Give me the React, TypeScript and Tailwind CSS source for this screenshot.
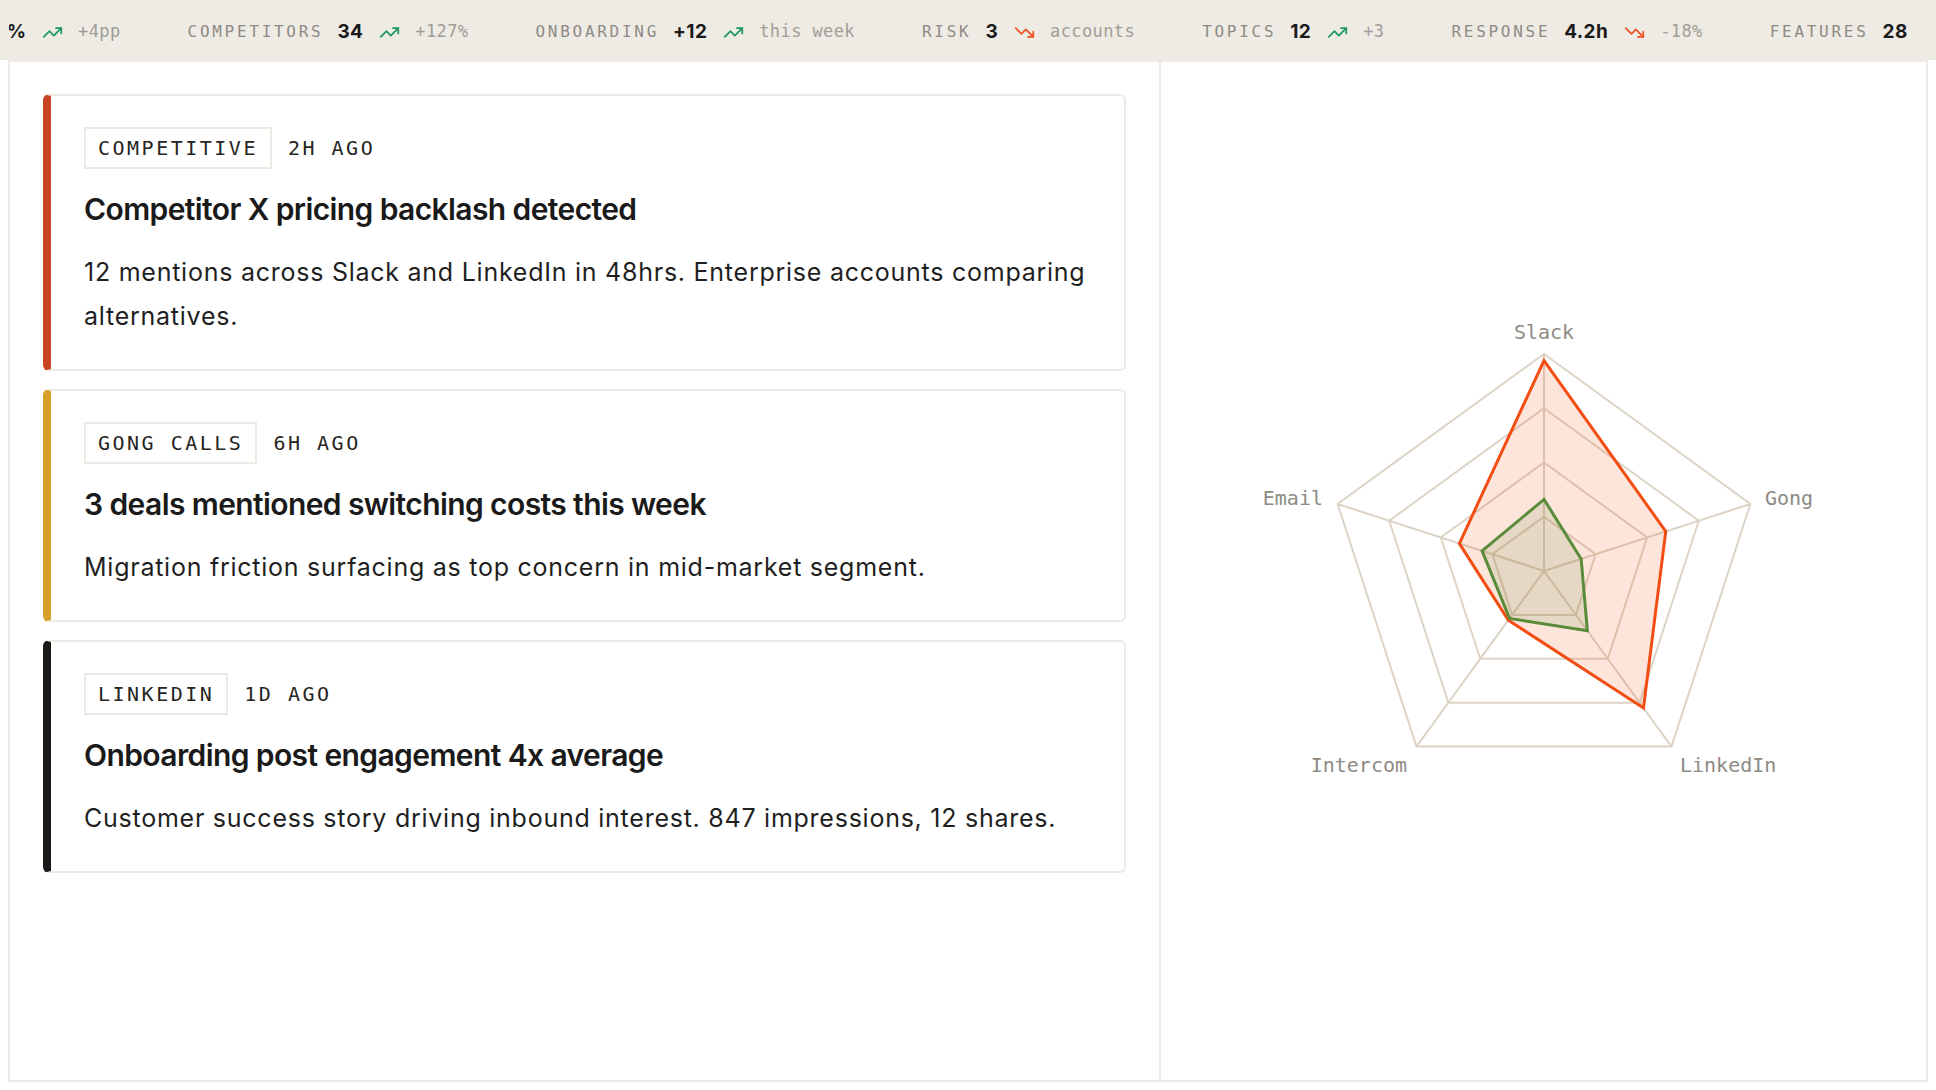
import { TrendingUp, TrendingDown } from "lucide-react";

type Tick = { label: string; value: string; up: boolean; delta: string };

const ticks: Tick[] = [
  { label: "COMPETITORS", value: "34", up: true, delta: "+127%" },
  { label: "ONBOARDING", value: "+12", up: true, delta: "this week" },
  { label: "RISK", value: "3", up: false, delta: "accounts" },
  { label: "TOPICS", value: "12", up: true, delta: "+3" },
  { label: "RESPONSE", value: "4.2h", up: false, delta: "-18%" },
  { label: "FEATURES", value: "28", up: true, delta: "+5" },
];

function TrendIcon({ up }: { up: boolean }) {
  return up ? (
    <TrendingUp size={21} strokeWidth={2} className="ml-[16px] shrink-0 text-[#1E9A62]" />
  ) : (
    <TrendingDown size={21} strokeWidth={2} className="ml-[16px] shrink-0 text-[#F0521F]" />
  );
}

function TickerItem({ t }: { t: Tick }) {
  return (
    <div className="flex shrink-0 items-center whitespace-nowrap">
      <span className="font-['DejaVu_Sans_Mono',monospace] text-[16px] tracking-[0.17em] text-[#8E8A84]">
        {t.label}
      </span>
      <span className="ml-[14px] font-['Inter',sans-serif] text-[19px] font-bold tracking-[0.02em] text-[#1A1A1A]">
        {t.value}
      </span>
      <TrendIcon up={t.up} />
      <span className="ml-[15px] font-['DejaVu_Sans_Mono',monospace] text-[17px] tracking-[0.4px] text-[#A19D97]">
        {t.delta}
      </span>
    </div>
  );
}

function Ticker() {
  return (
    <div className="flex h-[60px] shrink-0 bg-[#EEEAE4] pt-[4px]">
      <div className="mr-[16px] flex flex-1 items-center gap-[67px] overflow-hidden">
        <div className="flex shrink-0 items-center whitespace-nowrap">
          <div className="ml-[9px] flex w-[17px] justify-end overflow-hidden">
            <span className="shrink-0 font-['Inter',sans-serif] text-[19px] font-bold text-[#1A1A1A]">
              72%
            </span>
          </div>
          <TrendIcon up={true} />
          <span className="ml-[15px] font-['DejaVu_Sans_Mono',monospace] text-[17px] tracking-[0.4px] text-[#A19D97]">
            +4pp
          </span>
        </div>
        {ticks.map((t) => (
          <TickerItem key={t.label} t={t} />
        ))}
      </div>
    </div>
  );
}

type Signal = { tag: string; time: string; title: string; body: string; bar: string };

const signals: Signal[] = [
  {
    tag: "COMPETITIVE",
    time: "2H AGO",
    title: "Competitor X pricing backlash detected",
    body: "12 mentions across Slack and LinkedIn in 48hrs. Enterprise accounts comparing alternatives.",
    bar: "border-l-[#C8431F]",
  },
  {
    tag: "GONG CALLS",
    time: "6H AGO",
    title: "3 deals mentioned switching costs this week",
    body: "Migration friction surfacing as top concern in mid-market segment.",
    bar: "border-l-[#D6A02B]",
  },
  {
    tag: "LINKEDIN",
    time: "1D AGO",
    title: "Onboarding post engagement 4x average",
    body: "Customer success story driving inbound interest. 847 impressions, 12 shares.",
    bar: "border-l-[#1C1A17]",
  },
];

function SignalCard({ s }: { s: Signal }) {
  return (
    <div
      className={`rounded-[6px] border-2 border-l-8 border-[#EEEAE3] ${s.bar} bg-white pb-[31px] pl-[33px] pr-8 pt-[31px]`}
    >
      <div className="flex items-center gap-[16px] font-['DejaVu_Sans_Mono',monospace] text-[20px] leading-[26px] tracking-[2.5px] text-[#262522]">
        <span className="border-2 border-[#EEEAE3] px-[12px] py-[6px]">{s.tag}</span>
        <span>{s.time}</span>
      </div>
      <h2 className="mt-[22px] font-['Inter',sans-serif] text-[30px] font-semibold leading-[36px] tracking-[-0.02em] text-[#1A1A1A]">
        {s.title}
      </h2>
      <p className="mt-[23px] font-['Inter',sans-serif] text-[25px] leading-[44px] tracking-[0.03em] text-[#1F1F1F]">
        {s.body}
      </p>
    </div>
  );
}

function Radar() {
  const cx = 300;
  const cy = 280;
  const R = 217;
  const pt = (i: number, r: number): [number, number] => {
    const a = ((-90 + 72 * i) * Math.PI) / 180;
    return [cx + R * r * Math.cos(a), cy + R * r * Math.sin(a)];
  };
  const poly = (vals: number[]) =>
    vals.map((v, i) => pt(i, v).map((n) => n.toFixed(2)).join(",")).join(" ");
  const rings = [0.25, 0.5, 0.75, 1];
  const orange = [0.97, 0.59, 0.78, 0.28, 0.41];
  const green = [0.33, 0.18, 0.34, 0.27, 0.3];
  const labelCls = "font-['DejaVu_Sans_Mono',monospace]";
  return (
    <svg width={600} height={560} viewBox="0 0 600 560">
      <g stroke="#DDD4C7" strokeWidth={2} fill="none">
        {rings.map((r) => (
          <polygon key={r} points={poly([r, r, r, r, r])} />
        ))}
        {[0, 1, 2, 3, 4].map((i) => {
          const [x, y] = pt(i, 1);
          return <line key={i} x1={cx} y1={cy} x2={x} y2={y} />;
        })}
      </g>
      <polygon
        points={poly(orange)}
        fill="#F24E14"
        fillOpacity={0.15}
        stroke="#F24E14"
        strokeWidth={3}
        strokeLinejoin="miter"
      />
      <polygon
        points={poly(green)}
        fill="#5B8C3A"
        fillOpacity={0.15}
        stroke="#5B8C3A"
        strokeWidth={3}
      />
      <g fill="#8E8A84" fontSize={20} className={labelCls}>
        <text x={cx} y={cy - 232} textAnchor="middle">
          Slack
        </text>
        <text x={cx + 221} y={cy - 66} textAnchor="start">
          Gong
        </text>
        <text x={cx + 136} y={cy + 201} textAnchor="start">
          LinkedIn
        </text>
        <text x={cx - 137} y={cy + 201} textAnchor="end">
          Intercom
        </text>
        <text x={cx - 221} y={cy - 66} textAnchor="end">
          Email
        </text>
      </g>
    </svg>
  );
}

export default function App() {
  return (
    <div className="flex h-[1090px] w-full flex-col overflow-hidden bg-white">
      <Ticker />
      <div className="mx-2 mb-2 grid min-h-0 flex-1 grid-cols-[1151px_1fr] border-2 border-[#EEEAE3]">
        <div className="flex flex-col gap-[18px] border-r-2 border-[#EEEAE3] px-[33px] py-8">
          {signals.map((s) => (
            <SignalCard key={s.tag} s={s} />
          ))}
        </div>
        <div className="flex items-center justify-center">
          <Radar />
        </div>
      </div>
    </div>
  );
}
